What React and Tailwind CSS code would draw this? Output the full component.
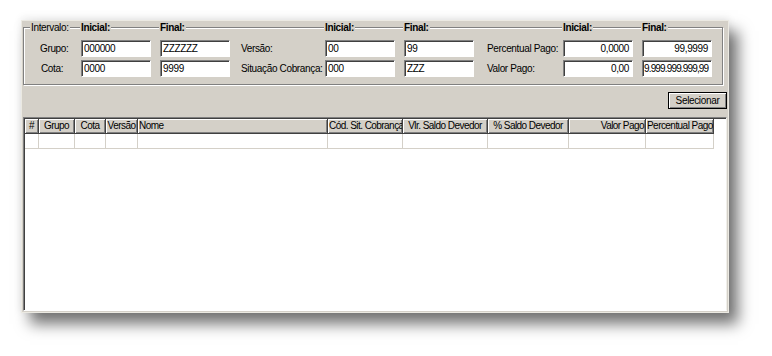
import React from "react";

const font = { fontFamily: '"Liberation Sans", Arial, sans-serif' };

function Field({ value, right, tight }) {
  return (
    <div
      className={`w-[70px] h-[17px] bg-white border-t border-l border-[#808080] border-b border-r border-b-white border-r-white shadow-[inset_1px_1px_0_#404040] flex items-center px-[2px] text-black leading-none whitespace-nowrap overflow-hidden ${
        right ? "justify-end pr-[3px]" : ""
      } ${tight ? "tracking-[-0.85px] pl-[1px] pr-0" : ""}`}
    >
      {value}
    </div>
  );
}

function Pair({ a, b, right }) {
  return (
    <div className="flex gap-[9px]">
      <Field value={a} right={right} />
      <Field value={b} right={right} />
    </div>
  );
}

function HeadPair() {
  return (
    <div className="flex w-[149px]">
      <div className="w-[79px]">
        <span className="-ml-[1px] px-[1px] bg-[#d4d0c8] font-bold">Inicial:</span>
      </div>
      <div className="w-[70px]">
        <span className="-ml-[1px] px-[1px] bg-[#d4d0c8] font-bold">Final:</span>
      </div>
    </div>
  );
}

const cols = [
  { name: "#", w: 14, align: "justify-center" },
  { name: "Grupo", w: 36, align: "justify-center" },
  { name: "Cota", w: 31, align: "justify-center" },
  { name: "Versão", w: 32, align: "justify-center" },
  { name: "Nome", w: 190, align: "justify-start" },
  { name: "Cód. Sit. Cobrança", w: 75, align: "justify-start" },
  { name: "Vlr. Saldo Devedor", w: 85, align: "justify-center" },
  { name: "% Saldo Devedor", w: 81, align: "justify-center" },
  { name: "Valor Pago", w: 77, align: "justify-end" },
  { name: "Percentual Pago", w: 68, align: "justify-start" },
];

export default function App() {
  return (
    <div className="w-[772px] h-[356px] bg-white pt-[20px] pl-[21px] overflow-hidden" style={font}>
      <div className="w-[708px] h-[293px] bg-[#d4d0c8] border border-[#ebe9e2] shadow-[9px_11px_14px_rgba(0,0,0,0.55),0_-2px_8px_rgba(0,0,0,0.08)] flex flex-col text-[10px] tracking-[-0.35px] text-black whitespace-nowrap">
        {/* Intervalo */}
        <div className="ml-[1px] mr-[5px] mt-[6px] border border-[#808080] shadow-[inset_1px_1px_0_#fff,1px_1px_0_#fff] pb-[7px]">
          <div className="flex -mt-[7px] h-[13px] items-center leading-none">
            <div className="w-[57px]">
              <span className="ml-[6px] px-[1px] bg-[#d4d0c8]">Intervalo:</span>
            </div>
            <HeadPair />
            <div className="w-[95px]" />
            <HeadPair />
            <div className="w-[89px]" />
            <HeadPair />
          </div>

          <div className="flex items-center mt-[6px]">
            <div className="w-[57px] pl-[16px]">Grupo:</div>
            <Pair a="000000" b="ZZZZZZ" />
            <div className="w-[95px] pl-[11px]">Versão:</div>
            <Pair a="00" b="99" />
            <div className="w-[89px] pl-[13px]">Percentual Pago:</div>
            <Pair a="0,0000" b="99,9999" right />
          </div>

          <div className="flex items-center mt-[3px]">
            <div className="w-[57px] pl-[17px]">Cota:</div>
            <Pair a="0000" b="9999" />
            <div className="w-[95px] pl-[11px]">Situação Cobrança:</div>
            <Pair a="000" b="ZZZ" />
            <div className="w-[89px] pl-[13px]">Valor Pago:</div>
            <div className="flex gap-[9px]">
              <Field value="0,00" right />
              <Field value="9.999.999.999,99" tight />
            </div>
          </div>
        </div>

        {/* Button */}
        <div className="flex justify-end mt-[7px] mr-[1px]">
          <button className="w-[59px] h-[17px] border border-black bg-[#d4d0c8] shadow-[inset_1px_1px_0_#fff,inset_-1px_-1px_0_#808080] flex items-center justify-center leading-none">
            Selecionar
          </button>
        </div>

        {/* Grid */}
        <div className="flex-1 ml-[1px] mr-[1px] mt-[8px] mb-[1px] bg-white border-t border-l border-[#808080] border-b border-r border-b-white border-r-[#f0efea] shadow-[inset_1px_1px_0_#404040]">
          <div className="flex pl-[1px] pt-[1px]">
            {cols.map((c) => (
              <div
                key={c.name}
                style={{ width: c.w }}
                className={`h-[15px] flex items-center ${c.align} px-[1px] bg-[#d4d0c8] border-r border-b border-[#404040] shadow-[inset_1px_1px_0_#fff,inset_-1px_-1px_0_#808080] overflow-hidden leading-none tracking-[-0.55px]`}
              >
                {c.name}
              </div>
            ))}
          </div>
          <div className="flex pl-[1px]">
            {cols.map((c) => (
              <div
                key={c.name}
                style={{ width: c.w }}
                className="h-[15px] border-r border-b border-[#d4d0c8]"
              />
            ))}
          </div>
        </div>
      </div>
    </div>
  );
}
